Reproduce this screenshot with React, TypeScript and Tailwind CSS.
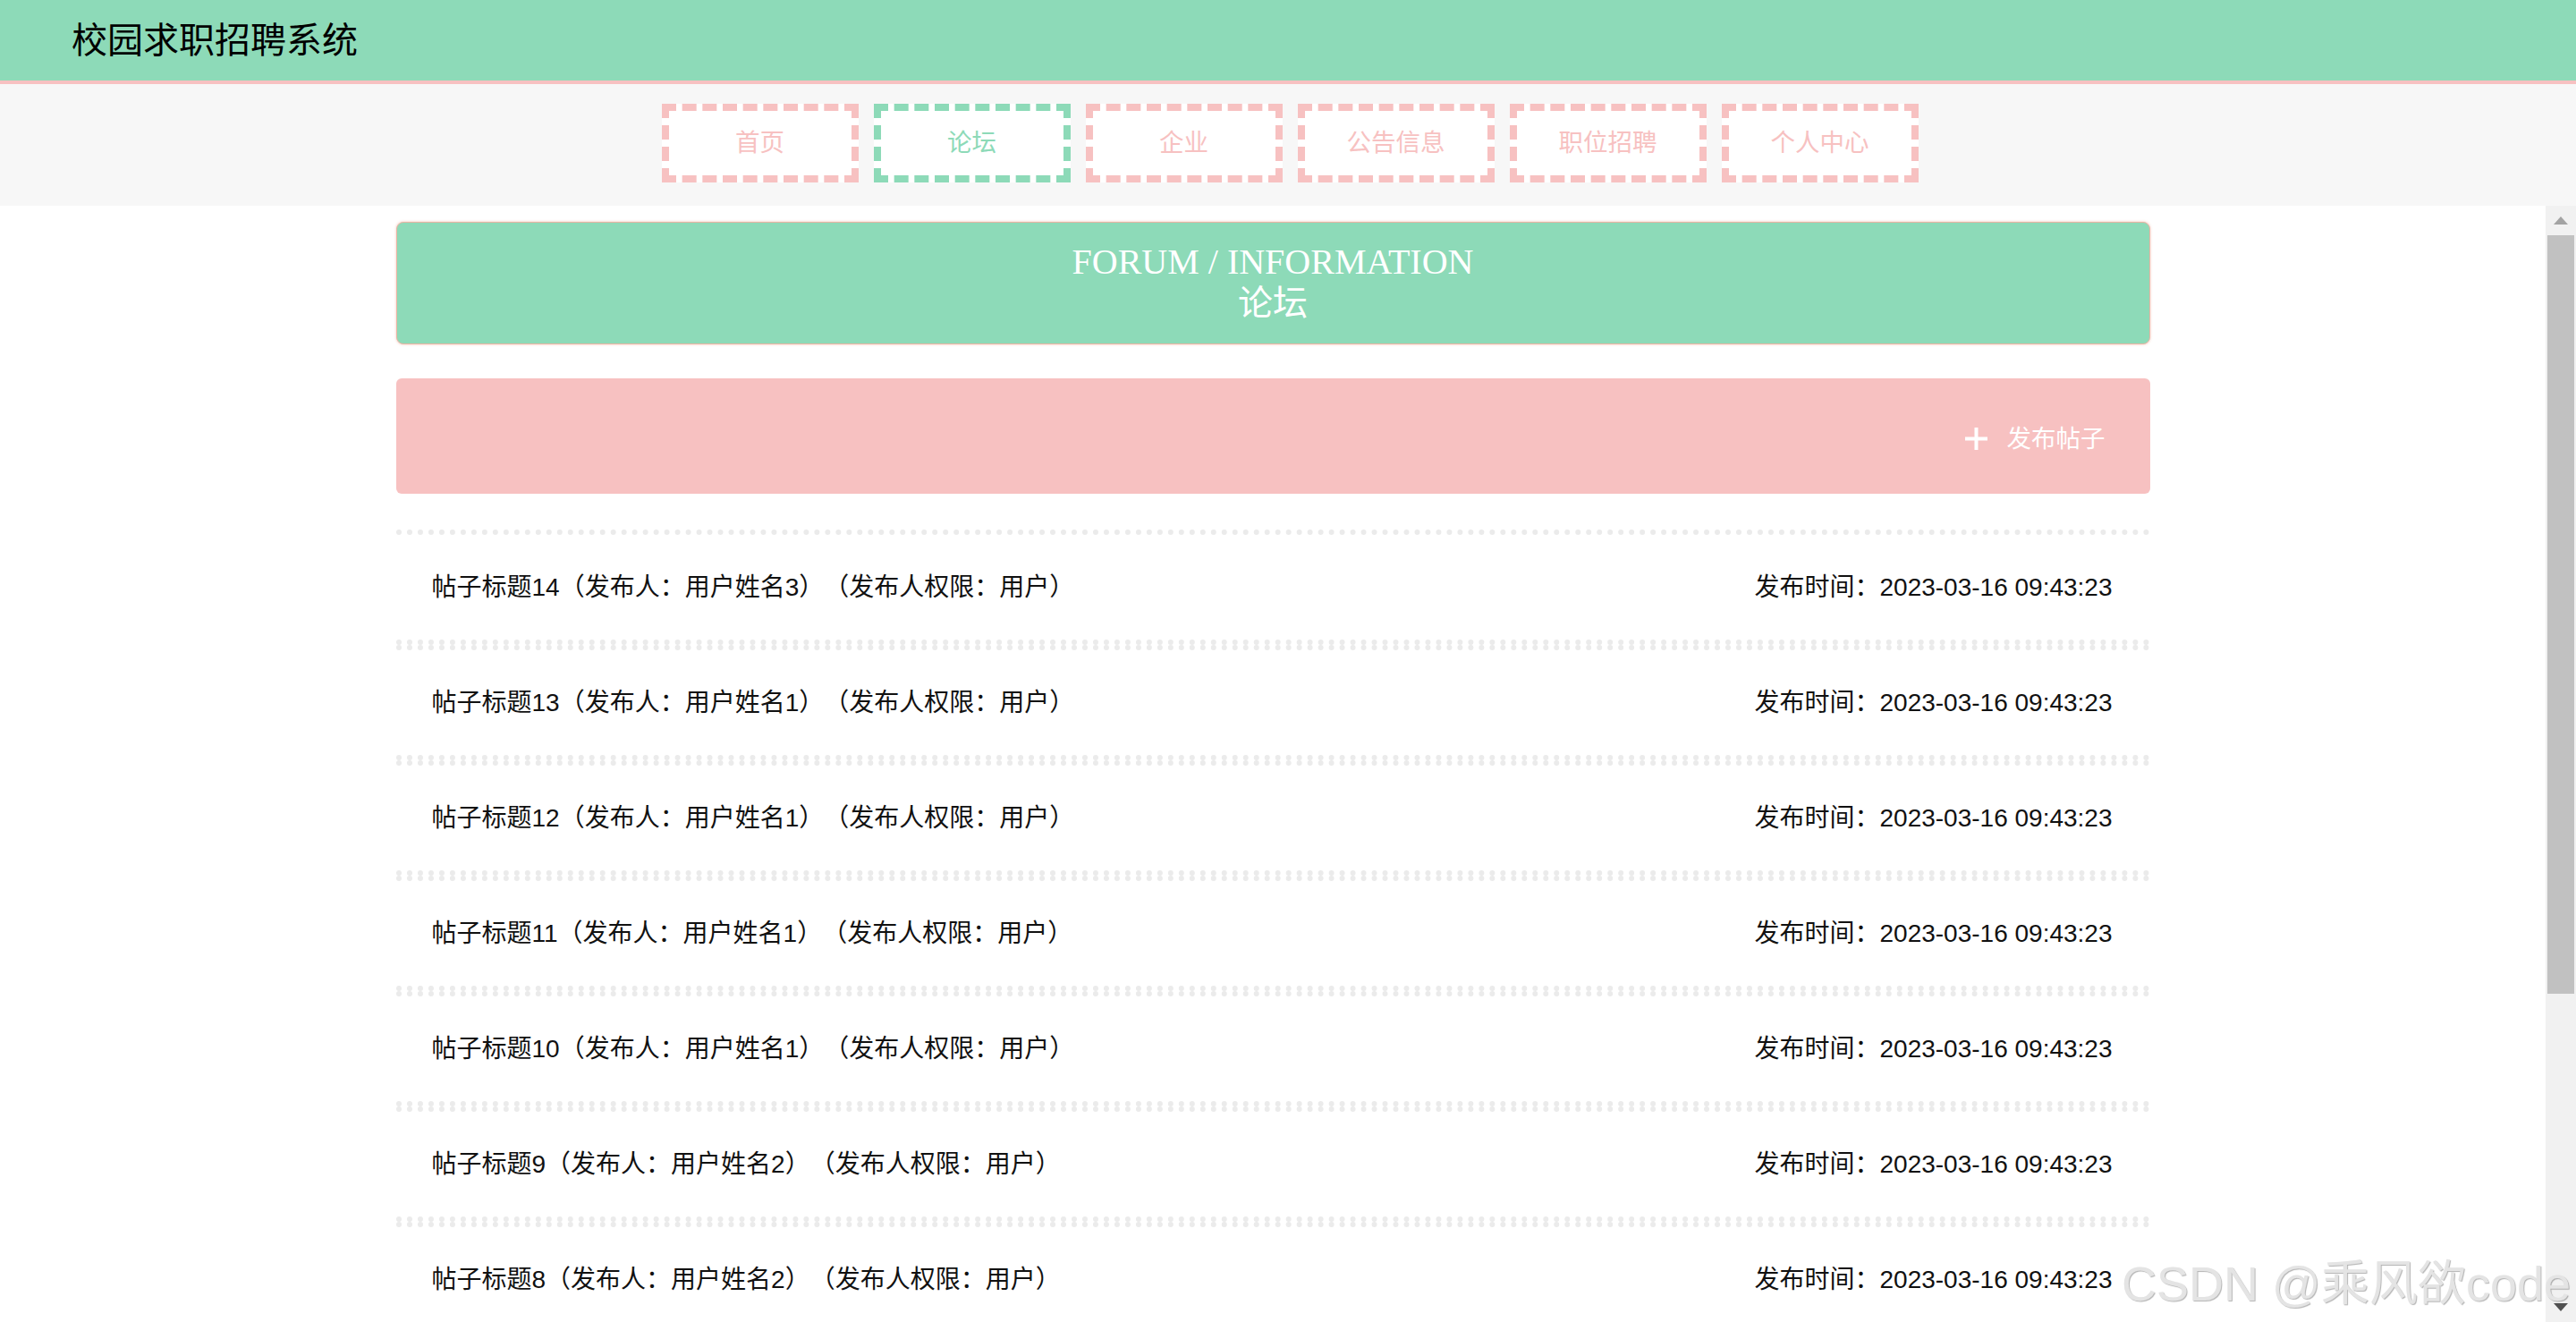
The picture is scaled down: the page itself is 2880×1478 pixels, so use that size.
const navItems = [
  { name: '首页', active: false },
  { name: '论坛', active: true },
  { name: '企业', active: false },
  { name: '公告信息', active: false },
  { name: '职位招聘', active: false },
  { name: '个人中心', active: false },
];

const posts = [
  { title: '帖子标题14', user: '用户姓名3' },
  { title: '帖子标题13', user: '用户姓名1' },
  { title: '帖子标题12', user: '用户姓名1' },
  { title: '帖子标题11', user: '用户姓名1' },
  { title: '帖子标题10', user: '用户姓名1' },
  { title: '帖子标题9', user: '用户姓名2' },
  { title: '帖子标题8', user: '用户姓名2' },
];

export default function App() {
  return (
    <div className="relative h-screen flex flex-col overflow-hidden bg-white font-['Liberation_Sans','Noto_Sans_CJK_SC',sans-serif] [text-spacing-trim:space-all]">
      {/* Top bar */}
      <header className="h-[94px] shrink-0 bg-[#8ddab8] border-b-4 border-[#f7c1c1] flex items-center pl-[80px]">
        <h1 className="text-[40px] leading-none text-black">校园求职招聘系统</h1>
      </header>

      {/* Nav */}
      <nav className="h-[136px] shrink-0 bg-[#f7f7f7] flex justify-center items-start pt-[22px] gap-[17px] pl-[4px]">
        {navItems.map((item) => (
          <div
            key={item.name}
            className={
              item.active
                ? 'w-[220px] h-[88px] bg-white border-8 border-dashed border-[#8ddab8] text-[#8ddab8] flex items-center justify-center text-[27.5px]'
                : 'w-[220px] h-[88px] bg-white border-8 border-dashed border-[#f7c1c1] text-[#f7c1c1] flex items-center justify-center text-[27.5px]'
            }
          >
            {item.name}
          </div>
        ))}
      </nav>

      <div className="flex-1 min-h-0 flex">
        {/* Page content */}
        <main className="flex-1 overflow-hidden">
          <div className="w-[1961px] mx-auto pt-[18px]">
            <div className="h-[137px] rounded-[8px] bg-[#8ddab8] border border-[#eab4a4] shadow-[0_0_3px_rgba(235,160,140,0.6)] flex flex-col items-center justify-center text-white pb-[2px]">
              <div className="font-['Liberation_Serif','Noto_Sans_CJK_SC',serif] text-[40px] leading-[46px]">FORUM / INFORMATION</div>
              <div className="font-['Liberation_Serif','Noto_Sans_CJK_SC',serif] text-[39px] leading-[46px]">论坛</div>
            </div>

            <div className="mt-[38px] h-[129px] rounded-[6px] bg-[#f7c1c1] flex items-center justify-end pr-[50px] pt-[6px] text-white">
              <svg width="25" height="25" viewBox="0 0 25 25" className="mr-[22px]">
                <rect x="10.5" y="0" width="4" height="25" fill="#ffffff" />
                <rect x="0" y="10.5" width="25" height="4" fill="#ffffff" />
              </svg>
              <span className="text-[27.5px]">发布帖子</span>
            </div>

            <div className="mt-[40px]">
              {posts.map((p) => (
                <div
                  key={p.title}
                  className="h-[129px] border-y-[6px] border-dotted border-[#ebebeb] flex items-center justify-between pl-[40px] pr-[42px] text-[#111] text-[28px]"
                >
                  <span>
                    {p.title}（发布人：{p.user}）（发布人权限：用户）
                  </span>
                  <span>发布时间：2023-03-16 09:43:23</span>
                </div>
              ))}
            </div>
          </div>
        </main>

        {/* Scrollbar */}
        <div className="w-[34px] shrink-0 bg-[#f1f1f1] flex flex-col">
          <div className="h-[33px] flex items-center justify-center">
            <svg width="16" height="9" viewBox="0 0 16 9">
              <path d="M8 0 L16 9 L0 9 Z" fill="#a3a3a3" />
            </svg>
          </div>
          <div className="h-[848px] mx-[2px] bg-[#c1c1c1]" />
          <div className="flex-1" />
          <div className="h-[33px] flex items-center justify-center">
            <svg width="16" height="9" viewBox="0 0 16 9">
              <path d="M0 0 L16 0 L8 9 Z" fill="#505050" />
            </svg>
          </div>
        </div>
      </div>

      {/* Watermark */}
      <div className="absolute right-[6px] bottom-[16px] text-[54px] leading-none text-[#e4e4e4] [text-shadow:1px_1px_1px_rgba(0,0,0,0.3)] pointer-events-none">
        CSDN @乘风欲code
      </div>
    </div>
  );
}
